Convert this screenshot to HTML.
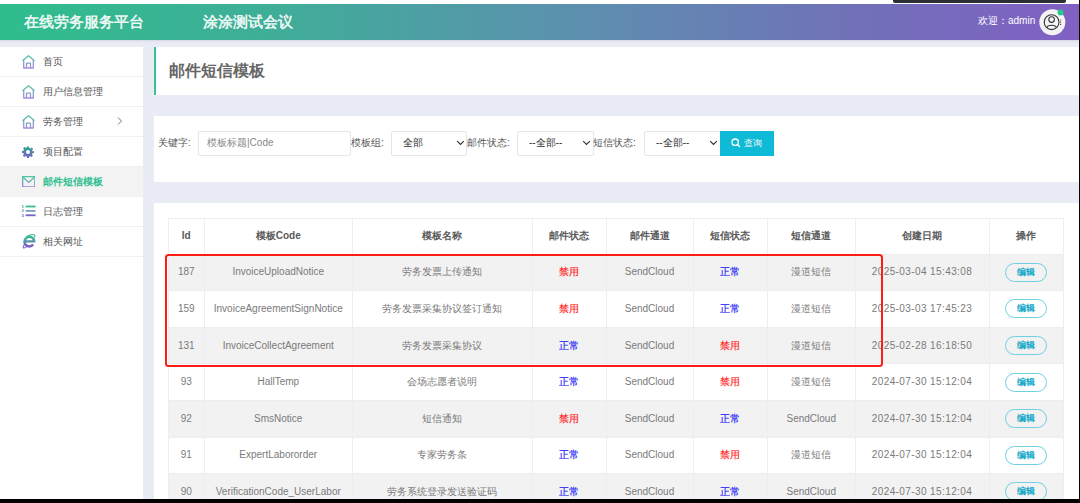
<!DOCTYPE html><html><head><meta charset="utf-8"><style>
*{margin:0;padding:0;box-sizing:border-box}
html,body{width:1080px;height:503px;overflow:hidden;background:#000}
body{font-family:"Liberation Sans",sans-serif;position:relative}
.a{position:absolute}
#page{position:absolute;left:0;top:0;width:1079px;height:499px;background:#e9ecf5;overflow:hidden}
#topstrip{left:0;top:0;width:1079px;height:4px;background:#fff}
#darkbar{left:893px;top:0;width:173px;height:2.5px;background:#2b2e33;border-radius:0 0 2px 2px}
#hdr{left:0;top:4px;width:1079px;height:36px;background:linear-gradient(90deg,#2fbd8d 0%,#3fae98 25%,#5e8eb0 55%,#7170b8 80%,#8160c4 100%);box-shadow:0 1px 2px rgba(80,60,90,.12)}
.brand{color:rgba(255,255,255,.92);font-weight:bold;font-size:15px;line-height:20px;top:11.5px}
#side{left:0;top:47px;width:143px;height:452px;background:#fff}
.mi{left:0;width:143px;height:30px;border-bottom:1px solid #f1f1f4}
.mt{left:42.5px;font-size:10px;line-height:12px;color:#555}
.ic{position:absolute}
.card{background:#fff;left:154px;width:925px}
.lbl{font-size:10px;color:#555;line-height:12px}
.box{border:1px solid #e3e6ec;border-radius:2px;background:#fff;top:130.5px;height:25.5px}
.th{font-size:10px;font-weight:bold;color:#5a5a5a;text-align:center;line-height:12px}
.td{font-size:10px;color:#7a7a7a;text-align:center;line-height:12px}
.red{color:#ff2a2a;-webkit-text-stroke:.2px #ff2a2a}.blue{color:#2f2ff8;-webkit-text-stroke:.2px #2f2ff8}.dt{letter-spacing:.4px}
.vl{position:absolute;width:1px;background:#eceef1}
.hl{position:absolute;height:1px;background:#eceef1}
.btn{border:1px solid #6fd0e3;border-radius:10px;width:42px;height:19px;color:#16a9c9;font-weight:bold;font-size:9px;line-height:17px;text-align:center}
</style></head><body><div id="page">
<div class="a" id="topstrip"></div><div class="a" id="darkbar"></div>
<div class="a" id="hdr"></div>
<div class="a brand" style="left:24px">在线劳务服务平台</div>
<div class="a brand" style="left:203px">涂涂测试会议</div>
<div class="a" style="left:978px;top:15px;font-size:10px;line-height:12px;color:#fff">欢迎：admin</div>
<svg class="ic" style="left:1039px;top:7px" width="30" height="30" viewBox="0 0 30 30"><circle cx="13.3" cy="15.2" r="13" fill="#f4f4f6"/><g fill="none" stroke="#333" stroke-width="1.1"><circle cx="12.6" cy="15.2" r="7.4"/><circle cx="12.6" cy="12.6" r="2.8"/><path d="M7.8 20.6 C8.8 17.4 16.4 17.4 17.4 20.6"/></g><g fill="#444"><circle cx="21.6" cy="13" r=".6"/><circle cx="21.6" cy="15.2" r=".6"/><circle cx="21.6" cy="17.4" r=".6"/></g><circle cx="21.5" cy="5.5" r="3" fill="#22cc88"/></svg>
<div class="a" id="side"></div>
<div class="a mi" style="top:47px;"></div>
<div class="a mt" style="top:56px;">首页</div>
<svg class="ic" style="left:21px;top:54px" width="16" height="16" viewBox="0 0 16 16"><defs><linearGradient id="gh54" gradientUnits="userSpaceOnUse" x1="0" y1="1" x2="0" y2="14"><stop offset="0" stop-color="#4fc6a0"/><stop offset="1" stop-color="#a88be0"/></linearGradient></defs><g fill="none" stroke="url(#gh54)" stroke-width="1.3" stroke-linejoin="round"><path d="M1.5 6.8 L7.5 1.7 L13.5 6.8"/><path d="M2.7 5.9 V14 H12.3 V5.9"/><path d="M5.5 14 V9.2 H9.5 V14"/></g></svg>
<div class="a mi" style="top:77px;"></div>
<div class="a mt" style="top:86px;">用户信息管理</div>
<svg class="ic" style="left:21px;top:84px" width="16" height="16" viewBox="0 0 16 16"><defs><linearGradient id="gh84" gradientUnits="userSpaceOnUse" x1="0" y1="1" x2="0" y2="14"><stop offset="0" stop-color="#4fc6a0"/><stop offset="1" stop-color="#a88be0"/></linearGradient></defs><g fill="none" stroke="url(#gh84)" stroke-width="1.3" stroke-linejoin="round"><path d="M1.5 6.8 L7.5 1.7 L13.5 6.8"/><path d="M2.7 5.9 V14 H12.3 V5.9"/><path d="M5.5 14 V9.2 H9.5 V14"/></g></svg>
<div class="a mi" style="top:107px;"></div>
<div class="a mt" style="top:116px;">劳务管理</div>
<svg class="ic" style="left:21px;top:114px" width="16" height="16" viewBox="0 0 16 16"><defs><linearGradient id="gh114" gradientUnits="userSpaceOnUse" x1="0" y1="1" x2="0" y2="14"><stop offset="0" stop-color="#4fc6a0"/><stop offset="1" stop-color="#a88be0"/></linearGradient></defs><g fill="none" stroke="url(#gh114)" stroke-width="1.3" stroke-linejoin="round"><path d="M1.5 6.8 L7.5 1.7 L13.5 6.8"/><path d="M2.7 5.9 V14 H12.3 V5.9"/><path d="M5.5 14 V9.2 H9.5 V14"/></g></svg>
<div class="a mi" style="top:137px;"></div>
<div class="a mt" style="top:146px;">项目配置</div>
<div class="a mi" style="top:167px;background:#f3f3f3;"></div>
<div class="a mt" style="top:176px;color:#2fbf8f;font-weight:bold;">邮件短信模板</div>
<div class="a mi" style="top:197px;"></div>
<div class="a mt" style="top:206px;">日志管理</div>
<div class="a mi" style="top:227px;"></div>
<div class="a mt" style="top:236px;">相关网址</div>
<svg class="ic" style="left:116px;top:116px" width="8" height="10" viewBox="0 0 8 10"><path d="M2 1.5 L5.5 5 L2 8.5" fill="none" stroke="#777" stroke-width="1"/></svg>
<svg class="ic" style="left:21.5px;top:145.5px" width="12" height="12" viewBox="0 0 24 24"><defs><linearGradient id="gg" x1="0" y1="0" x2="0" y2="1"><stop offset="0" stop-color="#2fa88e"/><stop offset="1" stop-color="#7a5fc8"/></linearGradient></defs><path fill="url(#gg)" fill-rule="evenodd" d="M10 1h4l.6 3.1 2.2.9 2.6-1.8 2.8 2.8-1.8 2.6.9 2.2L24 10v4l-3.1.6-.9 2.2 1.8 2.6-2.8 2.8-2.6-1.8-2.2.9L14 24h-4l-.6-3.1-2.2-.9-2.6 1.8-2.8-2.8 1.8-2.6-.9-2.2L0 14v-4l3.1-.6.9-2.2-1.8-2.6 2.8-2.8 2.6 1.8 2.2-.9zM12 8a4 4 0 1 0 0 8a4 4 0 1 0 0-8z"/></svg>
<svg class="ic" style="left:21.8px;top:175.8px" width="13.5" height="11.6" viewBox="0 0 13.5 11.6"><defs><linearGradient id="gm" gradientUnits="userSpaceOnUse" x1="0" y1="1" x2="0" y2="12"><stop offset="0" stop-color="#4fc6a0"/><stop offset="1" stop-color="#9a7ddc"/></linearGradient></defs><g fill="none" stroke="url(#gm)" stroke-width="1.3"><rect x=".65" y=".65" width="12.2" height="10.3"/><path d="M.9 1 L6.75 6.4 L12.6 1"/></g></svg>
<svg class="ic" style="left:21px;top:204px" width="16" height="14" viewBox="0 0 16 14"><g font-family="Liberation Sans" font-size="4.4" font-weight="bold"><text x=".6" y="3.9" fill="#2f9f88">1</text><text x=".6" y="8.3" fill="#5a88b0">2</text><text x=".6" y="12.7" fill="#7a60c0">3</text></g><rect x="4.6" y="1.6" width="10" height="1.8" fill="#3db69a"/><rect x="4.6" y="6" width="10" height="1.8" fill="#79a0bd"/><rect x="4.6" y="10.4" width="10" height="1.8" fill="#7466c0"/></svg>
<svg class="ic" style="left:19px;top:231.3px" width="20.5" height="20.5" viewBox="0 0 22 22"><defs><linearGradient id="ge" gradientUnits="userSpaceOnUse" x1="0" y1="4" x2="0" y2="18"><stop offset="0.2" stop-color="#3ab892"/><stop offset="0.55" stop-color="#5a8fb0"/><stop offset="0.85" stop-color="#7a5cc4"/></linearGradient></defs><g fill="none" stroke="url(#ge)"><path stroke-width="2.6" d="M7 11.1 H16.3 A5.2 5.2 0 1 0 15.2 14.6"/><path stroke-width="1.1" d="M6.2 14 C4.5 16 4 18 5 18.2 C6 18.4 7.5 17.6 8.5 16.8"/><path stroke-width="1.2" d="M8 5.8 C11 4.2 15 3.4 16.6 4.2 C17.4 4.8 17 6 16.2 7"/></g></svg>
<div class="a card" style="top:47px;height:47.5px;border-left:2px solid #3cc194"></div>
<div class="a" style="left:169px;top:62px;font-size:16px;line-height:18px;font-weight:bold;color:#666">邮件短信模板</div>
<div class="a card" style="top:115.5px;height:66.5px"></div>
<div class="a lbl" style="left:158px;top:137px">关键字:</div>
<div class="a box" style="left:197.5px;width:153px"></div>
<div class="a" style="left:207px;top:137px;font-size:10px;line-height:12px;color:#888">模板标题|Code</div>
<div class="a lbl" style="left:351px;top:137px">模板组:</div>
<div class="a box" style="left:390.5px;width:76px"></div>
<div class="a" style="left:403px;top:137px;font-size:10px;line-height:12px;color:#333">全部</div>
<svg class="ic" style="left:455.5px;top:140px" width="9" height="6" viewBox="0 0 9 6"><path d="M1.2 1.2 L4.5 4.5 L7.8 1.2" fill="none" stroke="#333" stroke-width="1.2"/></svg>
<div class="a lbl" style="left:467px;top:137px">邮件状态:</div>
<div class="a box" style="left:517px;width:76.5px"></div>
<div class="a" style="left:529px;top:137px;font-size:10px;line-height:12px;color:#333">--全部--</div>
<svg class="ic" style="left:582px;top:140px" width="9" height="6" viewBox="0 0 9 6"><path d="M1.2 1.2 L4.5 4.5 L7.8 1.2" fill="none" stroke="#333" stroke-width="1.2"/></svg>
<div class="a lbl" style="left:593px;top:137px">短信状态:</div>
<div class="a box" style="left:644px;width:76.5px"></div>
<div class="a" style="left:656px;top:137px;font-size:10px;line-height:12px;color:#333">--全部--</div>
<svg class="ic" style="left:709px;top:140px" width="9" height="6" viewBox="0 0 9 6"><path d="M1.2 1.2 L4.5 4.5 L7.8 1.2" fill="none" stroke="#333" stroke-width="1.2"/></svg>
<div class="a" style="left:720px;top:130.5px;width:54px;height:25.5px;background:#0fbad6"></div>
<svg class="ic" style="left:731px;top:138px" width="10" height="10" viewBox="0 0 10 10"><g fill="none" stroke="#fff" stroke-width="1.3"><circle cx="4.2" cy="4.2" r="3.2"/><path d="M6.6 6.6 L9 9"/></g></svg>
<div class="a" style="left:744px;top:138px;font-size:9px;line-height:11px;color:#fff">查询</div>
<div class="a card" style="top:203px;height:300px"></div>
<div class="a" style="left:168.5px;top:254.0px;width:894.5px;height:36.6px;background:#f2f2f2"></div>
<div class="a" style="left:168.5px;top:327.2px;width:894.5px;height:36.6px;background:#f2f2f2"></div>
<div class="a" style="left:168.5px;top:400.4px;width:894.5px;height:36.6px;background:#f2f2f2"></div>
<div class="a" style="left:168.5px;top:473.6px;width:894.5px;height:36.6px;background:#f2f2f2"></div>
<div class="hl" style="left:168.5px;top:218.0px;width:894.5px"></div>
<div class="hl" style="left:168.5px;top:253.5px;width:894.5px"></div>
<div class="hl" style="left:168.5px;top:290.1px;width:894.5px"></div>
<div class="hl" style="left:168.5px;top:326.7px;width:894.5px"></div>
<div class="hl" style="left:168.5px;top:363.3px;width:894.5px"></div>
<div class="hl" style="left:168.5px;top:399.9px;width:894.5px"></div>
<div class="hl" style="left:168.5px;top:436.5px;width:894.5px"></div>
<div class="hl" style="left:168.5px;top:473.1px;width:894.5px"></div>
<div class="hl" style="left:168.5px;top:509.7px;width:894.5px"></div>
<div class="vl" style="left:168.0px;top:218.0px;height:292.2px"></div>
<div class="vl" style="left:203.5px;top:218.0px;height:292.2px"></div>
<div class="vl" style="left:352.0px;top:218.0px;height:292.2px"></div>
<div class="vl" style="left:531.5px;top:218.0px;height:292.2px"></div>
<div class="vl" style="left:605.5px;top:218.0px;height:292.2px"></div>
<div class="vl" style="left:692.5px;top:218.0px;height:292.2px"></div>
<div class="vl" style="left:767.0px;top:218.0px;height:292.2px"></div>
<div class="vl" style="left:854.5px;top:218.0px;height:292.2px"></div>
<div class="vl" style="left:988.5px;top:218.0px;height:292.2px"></div>
<div class="vl" style="left:1062.5px;top:218.0px;height:292.2px"></div>
<div class="a th" style="left:168.5px;width:35.5px;top:230.0px">Id</div>
<div class="a th" style="left:204px;width:148.5px;top:230.0px">模板Code</div>
<div class="a th" style="left:352.5px;width:179.5px;top:230.0px">模板名称</div>
<div class="a th" style="left:532px;width:74px;top:230.0px">邮件状态</div>
<div class="a th" style="left:606px;width:87px;top:230.0px">邮件通道</div>
<div class="a th" style="left:693px;width:74.5px;top:230.0px">短信状态</div>
<div class="a th" style="left:767.5px;width:87.5px;top:230.0px">短信通道</div>
<div class="a th" style="left:855px;width:134px;top:230.0px">创建日期</div>
<div class="a th" style="left:989px;width:74px;top:230.0px">操作</div>
<div class="a td" style="left:168.5px;width:35.5px;top:266.3px">187</div>
<div class="a td" style="left:204px;width:148.5px;top:266.3px">InvoiceUploadNotice</div>
<div class="a td" style="left:352.5px;width:179.5px;top:266.3px">劳务发票上传通知</div>
<div class="a td red" style="left:532px;width:74px;top:266.3px">禁用</div>
<div class="a td" style="left:606px;width:87px;top:266.3px">SendCloud</div>
<div class="a td blue" style="left:693px;width:74.5px;top:266.3px">正常</div>
<div class="a td" style="left:767.5px;width:87.5px;top:266.3px">漫道短信</div>
<div class="a td dt" style="left:855px;width:134px;top:266.3px">2025-03-04 15:43:08</div>
<div class="a btn" style="left:1005.0px;top:262.8px">编辑</div>
<div class="a td" style="left:168.5px;width:35.5px;top:302.90000000000003px">159</div>
<div class="a td" style="left:204px;width:148.5px;top:302.90000000000003px">InvoiceAgreementSignNotice</div>
<div class="a td" style="left:352.5px;width:179.5px;top:302.90000000000003px">劳务发票采集协议签订通知</div>
<div class="a td red" style="left:532px;width:74px;top:302.90000000000003px">禁用</div>
<div class="a td" style="left:606px;width:87px;top:302.90000000000003px">SendCloud</div>
<div class="a td blue" style="left:693px;width:74.5px;top:302.90000000000003px">正常</div>
<div class="a td" style="left:767.5px;width:87.5px;top:302.90000000000003px">漫道短信</div>
<div class="a td dt" style="left:855px;width:134px;top:302.90000000000003px">2025-03-03 17:45:23</div>
<div class="a btn" style="left:1005.0px;top:299.40000000000003px">编辑</div>
<div class="a td" style="left:168.5px;width:35.5px;top:339.5px">131</div>
<div class="a td" style="left:204px;width:148.5px;top:339.5px">InvoiceCollectAgreement</div>
<div class="a td" style="left:352.5px;width:179.5px;top:339.5px">劳务发票采集协议</div>
<div class="a td blue" style="left:532px;width:74px;top:339.5px">正常</div>
<div class="a td" style="left:606px;width:87px;top:339.5px">SendCloud</div>
<div class="a td red" style="left:693px;width:74.5px;top:339.5px">禁用</div>
<div class="a td" style="left:767.5px;width:87.5px;top:339.5px">漫道短信</div>
<div class="a td dt" style="left:855px;width:134px;top:339.5px">2025-02-28 16:18:50</div>
<div class="a btn" style="left:1005.0px;top:336.0px">编辑</div>
<div class="a td" style="left:168.5px;width:35.5px;top:376.1px">93</div>
<div class="a td" style="left:204px;width:148.5px;top:376.1px">HallTemp</div>
<div class="a td" style="left:352.5px;width:179.5px;top:376.1px">会场志愿者说明</div>
<div class="a td blue" style="left:532px;width:74px;top:376.1px">正常</div>
<div class="a td" style="left:606px;width:87px;top:376.1px">SendCloud</div>
<div class="a td red" style="left:693px;width:74.5px;top:376.1px">禁用</div>
<div class="a td" style="left:767.5px;width:87.5px;top:376.1px">漫道短信</div>
<div class="a td dt" style="left:855px;width:134px;top:376.1px">2024-07-30 15:12:04</div>
<div class="a btn" style="left:1005.0px;top:372.6px">编辑</div>
<div class="a td" style="left:168.5px;width:35.5px;top:412.7px">92</div>
<div class="a td" style="left:204px;width:148.5px;top:412.7px">SmsNotice</div>
<div class="a td" style="left:352.5px;width:179.5px;top:412.7px">短信通知</div>
<div class="a td red" style="left:532px;width:74px;top:412.7px">禁用</div>
<div class="a td" style="left:606px;width:87px;top:412.7px">SendCloud</div>
<div class="a td blue" style="left:693px;width:74.5px;top:412.7px">正常</div>
<div class="a td" style="left:767.5px;width:87.5px;top:412.7px">SendCloud</div>
<div class="a td dt" style="left:855px;width:134px;top:412.7px">2024-07-30 15:12:04</div>
<div class="a btn" style="left:1005.0px;top:409.2px">编辑</div>
<div class="a td" style="left:168.5px;width:35.5px;top:449.3px">91</div>
<div class="a td" style="left:204px;width:148.5px;top:449.3px">ExpertLabororder</div>
<div class="a td" style="left:352.5px;width:179.5px;top:449.3px">专家劳务条</div>
<div class="a td blue" style="left:532px;width:74px;top:449.3px">正常</div>
<div class="a td" style="left:606px;width:87px;top:449.3px">SendCloud</div>
<div class="a td red" style="left:693px;width:74.5px;top:449.3px">禁用</div>
<div class="a td" style="left:767.5px;width:87.5px;top:449.3px">漫道短信</div>
<div class="a td dt" style="left:855px;width:134px;top:449.3px">2024-07-30 15:12:04</div>
<div class="a btn" style="left:1005.0px;top:445.8px">编辑</div>
<div class="a td" style="left:168.5px;width:35.5px;top:485.90000000000003px">90</div>
<div class="a td" style="left:204px;width:148.5px;top:485.90000000000003px">VerificationCode_UserLabor</div>
<div class="a td" style="left:352.5px;width:179.5px;top:485.90000000000003px">劳务系统登录发送验证码</div>
<div class="a td blue" style="left:532px;width:74px;top:485.90000000000003px">正常</div>
<div class="a td" style="left:606px;width:87px;top:485.90000000000003px">SendCloud</div>
<div class="a td blue" style="left:693px;width:74.5px;top:485.90000000000003px">正常</div>
<div class="a td" style="left:767.5px;width:87.5px;top:485.90000000000003px">SendCloud</div>
<div class="a td dt" style="left:855px;width:134px;top:485.90000000000003px">2024-07-30 15:12:04</div>
<div class="a btn" style="left:1005.0px;top:482.40000000000003px">编辑</div>
<div class="a" style="left:164.8px;top:253.8px;width:718.2px;height:113.6px;border:2.3px solid #ff1c14;border-radius:3.5px"></div>
</div></body></html>
